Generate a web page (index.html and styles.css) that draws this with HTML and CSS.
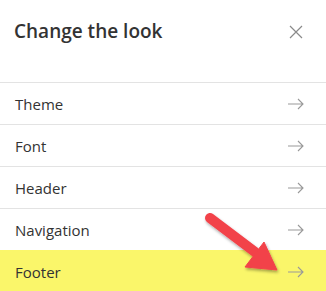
FILE: index.html
```html
<!DOCTYPE html>
<html lang="en">
<head>
<meta charset="UTF-8">
<title>Change the look</title>
<link rel="stylesheet" href="styles.css">
</head>
<body>
  <div class="panel">
    <div class="panel-header">
      <h1>Change the look</h1>
      <svg class="close" width="14" height="14" viewBox="0 0 14 14">
        <path d="M1 1 L13 13 M13 1 L1 13" stroke="#8a8a8a" stroke-width="1.2" fill="none"/>
      </svg>
    </div>
    <ul class="menu">
      <li class="item"><span>Theme</span><svg class="chevron" width="16" height="12" viewBox="0 0 16 12"><path d="M0 6 H15 M10 1 L15 6 L10 11" stroke="#999" stroke-width="1.1" fill="none"/></svg></li>
      <li class="item"><span>Font</span><svg class="chevron" width="16" height="12" viewBox="0 0 16 12"><path d="M0 6 H15 M10 1 L15 6 L10 11" stroke="#999" stroke-width="1.1" fill="none"/></svg></li>
      <li class="item"><span>Header</span><svg class="chevron" width="16" height="12" viewBox="0 0 16 12"><path d="M0 6 H15 M10 1 L15 6 L10 11" stroke="#999" stroke-width="1.1" fill="none"/></svg></li>
      <li class="item"><span>Navigation</span><svg class="chevron" width="16" height="12" viewBox="0 0 16 12"><path d="M0 6 H15 M10 1 L15 6 L10 11" stroke="#999" stroke-width="1.1" fill="none"/></svg></li>
      <li class="item highlight"><span>Footer</span><svg class="chevron" width="16" height="12" viewBox="0 0 16 12"><path d="M0 6 H15 M10 1 L15 6 L10 11" stroke="#999" stroke-width="1.1" fill="none"/></svg></li>
    </ul>
  </div>

  <!-- callout arrow drawn over the list -->
  <svg class="callout" width="326" height="291" viewBox="0 0 326 291">
    <defs>
      <filter id="shadow" x="-20%" y="-20%" width="140%" height="140%">
        <feDropShadow dx="1" dy="2" stdDeviation="1.5" flood-color="#000" flood-opacity="0.35"/>
      </filter>
    </defs>
    <g filter="url(#shadow)" fill="#f2424a" stroke="#f2424a">
      <line x1="210" y1="218" x2="255" y2="252" stroke-width="10" stroke-linecap="round"/>
      <polygon points="245,267 264,242 277,270" stroke-width="1" stroke-linejoin="round"/>
    </g>
  </svg>
</body>
</html>
```

FILE: styles.css
```css
body {
  margin: 0;
  background: #fff;
  font-family: 'Open Sans', 'Liberation Sans', sans-serif;
  color: #333;
}
.panel {
  width: 326px;
}
.panel-header {
  display: flex;
  justify-content: space-between;
  align-items: center;
  height: 82px;
  padding: 0 23px 20px 14px;
  box-sizing: border-box;
}
h1 {
  margin: 0;
  font-size: 19px;
  font-weight: 600;
  color: #333;
}
.close {
  margin-top: 2px;
}
.menu {
  list-style: none;
  margin: 0;
  padding: 0;
}
.item {
  display: flex;
  justify-content: space-between;
  align-items: center;
  height: 42px;
  padding: 0 22px 0 15px;
  border-top: 1px solid #e3e3e3;
  box-sizing: border-box;
  font-size: 15px;
}
.item.highlight {
  background: #faf66a;
  border-top-color: #faf66a;
}
.callout {
  position: absolute;
  left: 0;
  top: 0;
  pointer-events: none;
}
```
